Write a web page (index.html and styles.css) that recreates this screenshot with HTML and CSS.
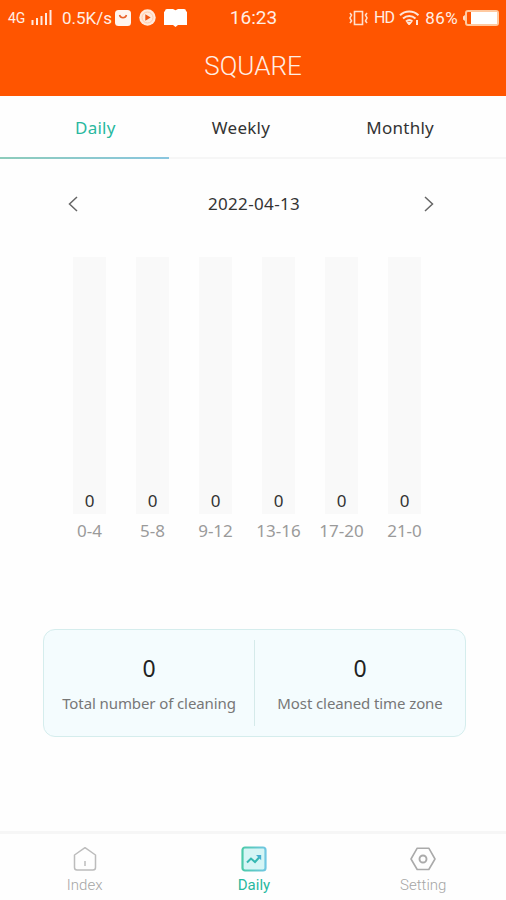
FILE: index.html
```html
<!DOCTYPE html>
<html lang="en">
<head>
<meta charset="utf-8">
<meta name="viewport" content="width=device-width">
<title>Square</title>
<link rel="stylesheet" href="styles.css">
</head>
<body>
<div class="app">
  <header class="header">
    <div class="status">
      <div class="status-left">
        <span class="net">4G</span>
        <svg class="signal" width="21" height="16" viewBox="0 0 21 16"><path d="M1.500 10v5M6 8v7M10.500 6v9M15 3v12M19.500 0v15" stroke="#ffeadf" stroke-width="2"/></svg>
        <span class="speed">0.5K/s</span>
        <svg class="bag" width="16" height="16" viewBox="0 0 16 16"><rect width="16" height="16" rx="3.500" fill="#fff5ee"/><path d="M4.500 5c1 3.600 6 3.600 7 0" fill="none" stroke="#e8622a" stroke-width="1.500"/></svg>
        <svg class="play" width="17" height="17" viewBox="0 0 17 17"><circle cx="8.500" cy="8.500" r="8.200" fill="#ffe9dc"/><circle cx="8.500" cy="8.500" r="5.500" fill="none" stroke="#ffc9a8"/><path d="M6.300 5.200l5.400 3.300-5.400 3.300z" fill="#ee5514"/></svg>
        <svg class="book" width="23" height="18" viewBox="0 0 23 18"><path d="M3 0h6l2.500 1.300L14 0h6q2 0 2 2l1 1v13h-9l-2.500 2L9 16H0V3l1-1q0-2 2-2z" fill="#fff"/></svg>
      </div>
      <span class="clock">16:23</span>
      <div class="status-right">
        <svg class="vibrate" width="19" height="16" viewBox="0 0 19 16" fill="none" stroke="#ffdfcc" stroke-width="1.600"><path d="M5.500 1.500h8v13h-8zM1 3l1.500 2L1 8l1.500 3L1 13M18 3l-1.500 2L18 8l-1.500 3 1.500 2"/></svg>
        <span class="hd">HD</span>
        <svg class="wifi" width="21" height="16" viewBox="0 0 21 16" fill="none" stroke="#ffe6d8" stroke-width="2"><path d="M1 5.200c5.300-5 13.200-5 18.500 0M4 8.500c3.700-3.400 8.800-3.400 12.500 0M7 11.500c2-1.700 4.500-1.700 6.500 0"/><path d="M8 12.500h4.500L10.200 15z" fill="#ffe6d8" stroke-width="1"/><path d="M18 10v5"/></svg>
        <span class="percent">86%</span>
        <svg class="battery" width="36" height="16" viewBox="0 0 36 16"><path d="M2 5L0 6.500v3L2 11z" fill="#ffdcc4"/><rect x="3" y="1" width="32" height="14" rx="2" fill="none" stroke="#ffc9a0" stroke-width="2"/><path d="M8 2h26v12H8z" fill="#fff"/></svg>
      </div>
    </div>
    <h1 class="title">SQUARE</h1>
  </header>
  <nav class="tabs">
    <span class="tab tab-active">Daily</span>
    <span class="tab">Weekly</span>
    <span class="tab">Monthly</span>
  </nav>
  <div class="tab-line"><div class="tab-marker"></div></div>
  <main class="content">
    <div class="date-row">
      <svg width="10" height="16" viewBox="0 0 10 16"><path d="M9 1L1.500 8 9 15"/></svg>
      <span class="date">2022-04-13</span>
      <svg width="10" height="16" viewBox="0 0 10 16"><path d="M1 1l7.500 7L1 15"/></svg>
    </div>
    <div class="chart">
      <div class="column"><div class="bar">0</div><span>0-4</span></div>
      <div class="column"><div class="bar">0</div><span>5-8</span></div>
      <div class="column"><div class="bar">0</div><span>9-12</span></div>
      <div class="column"><div class="bar">0</div><span>13-16</span></div>
      <div class="column"><div class="bar">0</div><span>17-20</span></div>
      <div class="column"><div class="bar">0</div><span>21-0</span></div>
    </div>
    <section class="summary">
      <div class="stat"><strong>0</strong><span>Total number of cleaning</span></div>
      <div class="divider"></div>
      <div class="stat"><strong>0</strong><span>Most cleaned time zone</span></div>
    </section>
  </main>
  <footer class="bottom-nav">
    <div class="nav-item">
      <svg width="26" height="26" viewBox="0 0 26 26" fill="none" stroke="#bcbcbc" stroke-width="1.500" stroke-linejoin="round"><path d="M2.500 9L13 1.700 23.500 9v12.500q0 2.500-2.500 2.500H5q-2.500 0-2.500-2.500z"/><path d="M13 15v5"/></svg>
      <span>Index</span>
    </div>
    <div class="nav-item nav-active">
      <svg width="26" height="26" viewBox="0 0 26 26" fill="none">
        <defs><linearGradient id="edge"><stop stop-color="#4dcaaa"/><stop offset="1" stop-color="#71c7e2"/></linearGradient></defs>
        <rect x="1.500" y="1.500" width="23" height="23" rx="2.500" fill="#d5f5f5" stroke="url(#edge)" stroke-width="2.200"/>
        <path d="M6 16.500l4-4 4 3.500 5-5.500" stroke="#35b8b2" stroke-width="2"/><path d="M15 9h5.200v5.200z" fill="#45adcf"/>
      </svg>
      <span>Daily</span>
    </div>
    <div class="nav-item">
      <svg width="26" height="26" viewBox="0 0 26 26" fill="none" stroke="#aaa" stroke-width="1.600" stroke-linejoin="round"><path d="M7.200 2.200h11.600L25 13l-6.200 10.500H7.200L1 13z"/><circle cx="13" cy="13" r="3.500" stroke-width="1.900"/></svg>
      <span>Setting</span>
    </div>
  </footer>
</div>
</body>
</html>
```
FILE: styles.css
```css
* { box-sizing: border-box; }

body {
  margin: 0;
  background: #fefefe;
  font-family: "Noto Sans", sans-serif;
  color: #333;
}

.app {
  display: flex;
  flex-direction: column;
  width: 506px;
  height: 900px;
  overflow: hidden;
}

.header {
  height: 96px;
  background: #ff5500;
  color: #ffeee5;
  font-family: Roboto, sans-serif;
}

.status {
  display: grid;
  grid-template-columns: 1fr 48px 1fr;
  align-items: center;
  height: 35px;
  padding: 0 7px 0 8px;
}

.status-left,
.status-right {
  display: flex;
  align-items: center;
  white-space: nowrap;
}

.status-right { justify-content: flex-end; }
.status svg { flex: none; }
.net { width: 23px; font-size: 14px; }
.speed { width: 53px; margin-left: 10px; font-size: 17px; }
.play { margin-left: 8px; }
.book { margin-left: 8px; }
.clock { font-size: 19px; text-align: center; }
.hd { margin-left: 6px; font-size: 16px; letter-spacing: -0.9px; }
.wifi { margin-left: 5px; }
.percent { margin: 0 5px; font-size: 17px; letter-spacing: 0.4px; }

.title {
  margin: 13px 0 0;
  font-size: 26px;
  font-weight: 300;
  line-height: 36px;
  text-align: center;
}

.tabs {
  display: flex;
  justify-content: space-between;
  align-items: center;
  height: 60px;
  padding: 2px 72px 0 75px;
  font-size: 17px;
  letter-spacing: 0.25px;
}

.tab-active { color: #28b89e; }

.tab-line { height: 3px; border-bottom: 2px solid #f6f6f6; }

.tab-marker {
  width: 169px;
  height: 2px;
  margin-top: 1px;
  background: linear-gradient(90deg, #8dccbb, #8ac6df);
}

.tab-line { display: flow-root; }

.content { flex: 1; }

.date-row {
  display: flex;
  justify-content: space-between;
  align-items: center;
  height: 30px;
  margin: 30px 72px 0 68px;
  font-size: 17px;
}

.date { padding: 0 0 2px 6px; letter-spacing: 0.35px; }

.date-row svg { fill: none; stroke: #666; stroke-width: 1.5; }

.chart {
  display: grid;
  grid-template-columns: repeat(6, 63px);
  margin: 38px 0 0 58px;
}

.column {
  display: flex;
  flex-direction: column;
  align-items: center;
  color: #9a9a9a;
  font-size: 17px;
  line-height: 26px;
}

.bar {
  display: flex;
  align-items: flex-end;
  justify-content: center;
  width: 33px;
  height: 257px;
  margin-bottom: 4px;
  background: #f9f9f9;
  color: #333;
}

.summary {
  display: flex;
  align-items: center;
  width: 423px;
  height: 108px;
  margin: 85px 0 0 43px;
  border: 1.5px solid #d5eded;
  border-radius: 12px;
  background: #f4fcfe;
}

.stat {
  display: flex;
  flex: 1;
  flex-direction: column;
  align-items: center;
  font-size: 15px;
  letter-spacing: -0.1px;
  line-height: 24px;
  color: #777;
  white-space: nowrap;
}

.stat strong {
  margin-bottom: 7px;
  color: #222;
  font-size: 23px;
  font-weight: 400;
  line-height: 32px;
}

.divider { width: 1px; height: 86px; background: #d5eaea; }

.bottom-nav {
  display: grid;
  grid-template-columns: repeat(3, 169.3px);
  height: 69px;
  padding-top: 12px;
  border-top: 3px solid #f6f6f6;
  font-family: Roboto, sans-serif;
  font-weight: 300;
  font-size: 15px;
}

.nav-item {
  display: flex;
  flex-direction: column;
  align-items: center;
  gap: 4px;
  line-height: 18px;
  color: #a5a5a5;
}

.nav-active { color: #28b89e; font-weight: 400; }
```
